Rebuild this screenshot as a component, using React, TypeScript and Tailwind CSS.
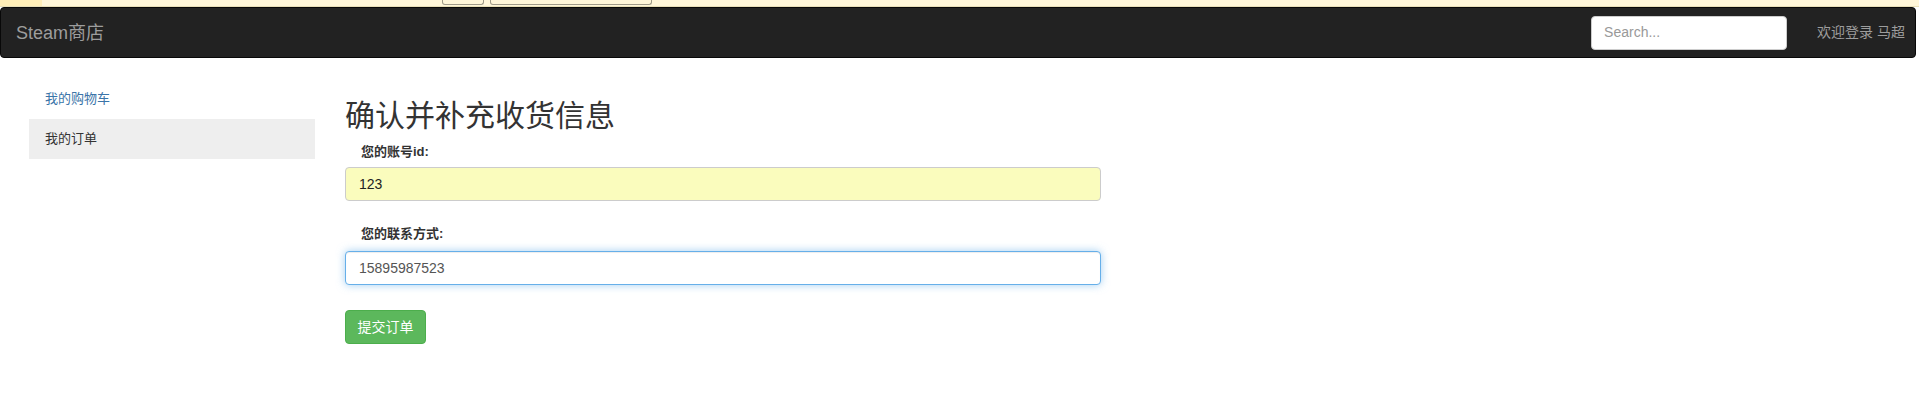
import React from "react";

const font = { fontFamily: '"Liberation Sans", "Noto Sans CJK SC", sans-serif' };

export default function App() {
  return (
    <div className="w-[1919px] h-[418px] bg-white text-[14px] text-[#333] overflow-hidden" style={font}>
      {/* top yellow strip */}
      <div className="h-[7px] bg-[#fff6d9] border-b border-[#e8dfb8] flex items-end relative">
        <div className="absolute left-0 top-0 h-[6px] w-[42px] bg-[#ffeeb8]" />
        <div className="absolute left-[442px] bottom-[1px] h-[6px] w-[42px] border border-t-0 border-[#9f9a88] rounded-b-[3px]" />
        <div className="absolute left-[490px] bottom-[1px] h-[6px] w-[162px] border border-t-0 border-[#9f9a88] rounded-b-[3px]" />
      </div>

      {/* navbar */}
      <div className="mr-[3px] h-[51px] bg-[#222222] border border-[#080808] rounded-[4px] flex items-center">
        <div className="pl-[15px] text-[18px] text-[#9d9d9d] leading-[20px]">Steam商店</div>
        <div className="flex-1" />
        <div className="w-[196px] h-[34px] bg-white rounded-[4px] border border-[#ccc] flex items-center pl-[12px] text-[14px] text-[#999]">
          Search...
        </div>
        <div className="ml-[30px] mr-[10px] text-[14px] text-[#9d9d9d]">欢迎登录 马超</div>
      </div>

      {/* body */}
      <div className="flex mt-[21px]">
        <div className="ml-[29px] w-[286px] flex flex-col">
          <div className="h-[40px] flex items-center pl-[16px] text-[13px] text-[#3a74a8]">我的购物车</div>
          <div className="h-[40px] flex items-center pl-[16px] text-[13px] text-[#333] bg-[#eeeeee]">我的订单</div>
        </div>
        <div className="ml-[30px] w-[756px] flex flex-col">
          <h2 className="mt-[20px] text-[30px] leading-[33px] text-[#333] font-normal">确认并补充收货信息</h2>
          <label className="mt-[10px] pl-[16px] h-[20px] leading-[20px] text-[13px] font-bold text-[#333]">您的账号id:</label>
          <div className="mt-[5px] h-[34px] rounded-[4px] border border-[#cccccc] bg-[#fafcbd] flex items-center pl-[13px] text-[14px] text-[#222]">
            123
          </div>
          <label className="mt-[23px] pl-[16px] h-[20px] leading-[20px] text-[13px] font-bold text-[#333]">您的联系方式:</label>
          <div className="mt-[7px] h-[34px] rounded-[4px] border border-[#66afe9] bg-white flex items-center pl-[13px] text-[14px] text-[#555] shadow-[inset_0_1px_1px_rgba(0,0,0,0.075),0_0_8px_rgba(102,175,233,0.6)]">
            15895987523
          </div>
          <div className="mt-[25px]">
            <button className="h-[34px] w-[81px] rounded-[4px] bg-[#5cb85c] border border-[#4cae4c] text-white text-[14px]">
              提交订单
            </button>
          </div>
        </div>
      </div>
    </div>
  );
}
